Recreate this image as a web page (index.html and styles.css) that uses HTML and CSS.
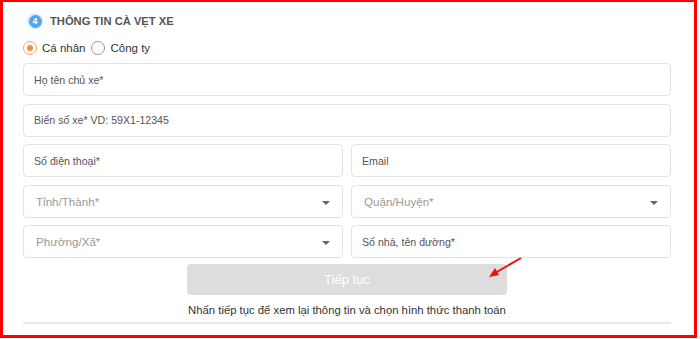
FILE: index.html
```html
<!DOCTYPE html>
<html lang="vi">
<head>
    <meta charset="UTF-8">
    <meta name="viewport" content="width=device-width, initial-scale=1.0">
    <title>Thông tin cà vẹt xe</title>
    <link rel="stylesheet" href="styles.css">
</head>
<body>

<div class="frame">
    <div class="step-title">
        <span class="badge"><span>4</span></span>
        <h2>THÔNG TIN CÀ VẸT XE</h2>
    </div>

    <div class="radio-row">
        <label class="radio"><span class="dot checked"></span>Cá nhân</label>
        <label class="radio"><span class="dot"></span>Công ty</label>
    </div>

    <div class="form">
        <div class="field text">Họ tên chủ xe*</div>
        <div class="field text">Biển số xe* VD: 59X1-12345</div>
        <div class="row">
            <div class="field text">Số điện thoại*</div>
            <div class="field text">Email</div>
        </div>
        <div class="row">
            <div class="field select">Tỉnh/Thành*<span class="caret"></span></div>
            <div class="field select">Quận/Huyện*<span class="caret"></span></div>
        </div>
        <div class="row">
            <div class="field select">Phường/Xã*<span class="caret"></span></div>
            <div class="field text">Số nhà, tên đường*</div>
        </div>
    </div>

    <div class="actions">
        <button class="next-btn">Tiếp tục</button>
        <p class="hint">Nhấn tiếp tục để xem lại thông tin và chọn hình thức thanh toán</p>
    </div>
    <div class="divider"></div>

    <!-- annotation arrow pointing at the button -->
    <svg class="arrow" width="40" height="26" viewBox="0 0 40 26">
        <line x1="36" y1="2" x2="10" y2="17" stroke="#ee1111" stroke-width="2"/>
        <polygon points="4,21 10,12 14,19" fill="#ee1111"/>
    </svg>
</div>

</body>
</html>
```

FILE: styles.css
```css
body {
    margin: 0;
    font-family: "Liberation Sans", Arial, sans-serif;
    background: #fff;
    color: #333;
}
.frame {
    position: relative;
    width: 697px;
    height: 338px;
    box-sizing: border-box;
    border: 3px solid #ff0000;
    border-top-width: 2px;
    padding: 11px 23px 0 20px;
    background: #fff;
}
.step-title {
    display: flex;
    align-items: center;
    height: 16px;
}
.badge {
    width: 16px;
    height: 16px;
    border-radius: 50%;
    background: #dcecfa;
    display: flex;
    align-items: center;
    justify-content: center;
    margin-left: 4px;
}
.badge span {
    width: 13px;
    height: 13px;
    border-radius: 50%;
    background: #55a6ea;
    color: #fff;
    font-size: 9px;
    font-weight: bold;
    line-height: 13px;
    text-align: center;
}
.step-title h2 {
    margin: 0 0 0 7px;
    font-size: 11.2px;
    font-weight: bold;
    color: #555;
}
.radio-row {
    display: flex;
    align-items: center;
    height: 18px;
    margin-top: 10px;
}
.radio {
    display: flex;
    align-items: center;
    font-size: 11.5px;
    color: #333;
    margin-right: 6px;
}
.dot {
    width: 12px;
    height: 12px;
    border: 1px solid #999;
    border-radius: 50%;
    margin-right: 5px;
    box-sizing: content-box;
    position: relative;
    background: #fff;
}
.dot.checked {
    border-color: #f5a25a;
}
.dot.checked::after {
    content: "";
    position: absolute;
    left: 3px;
    top: 3px;
    width: 6px;
    height: 6px;
    border-radius: 50%;
    background: #f39038;
}
.form {
    margin-top: 6px;
    display: flex;
    flex-direction: column;
    gap: 7.5px;
}
.row {
    display: grid;
    grid-template-columns: 1fr 1fr;
    gap: 8px;
}
.field {
    height: 33px;
    box-sizing: border-box;
    border: 1px solid #e3e3e3;
    border-radius: 4px;
    padding: 0 10px;
    display: flex;
    align-items: center;
    position: relative;
}
.field.text {
    font-size: 10.6px;
    color: #555;
}
.field.select {
    font-size: 11.6px;
    color: #999;
    padding-left: 12px;
}
.caret {
    position: absolute;
    right: 12px;
    top: 15px;
    width: 0;
    height: 0;
    border-left: 4px solid transparent;
    border-right: 4px solid transparent;
    border-top: 4px solid #666;
}
.actions {
    display: flex;
    flex-direction: column;
    align-items: center;
}
.next-btn {
    margin-top: 6px;
    width: 320px;
    height: 31px;
    border: none;
    border-radius: 4px;
    background: #dddddd;
    color: #fff;
    font-family: inherit;
    font-size: 13px;
}
.hint {
    margin: 9px 0 0;
    font-size: 11.3px;
    color: #333;
}
.divider {
    margin-top: 6px;
    height: 2px;
    background: #e8e8e8;
}
.arrow {
    position: absolute;
    left: 482px;
    top: 254px;
}
```
